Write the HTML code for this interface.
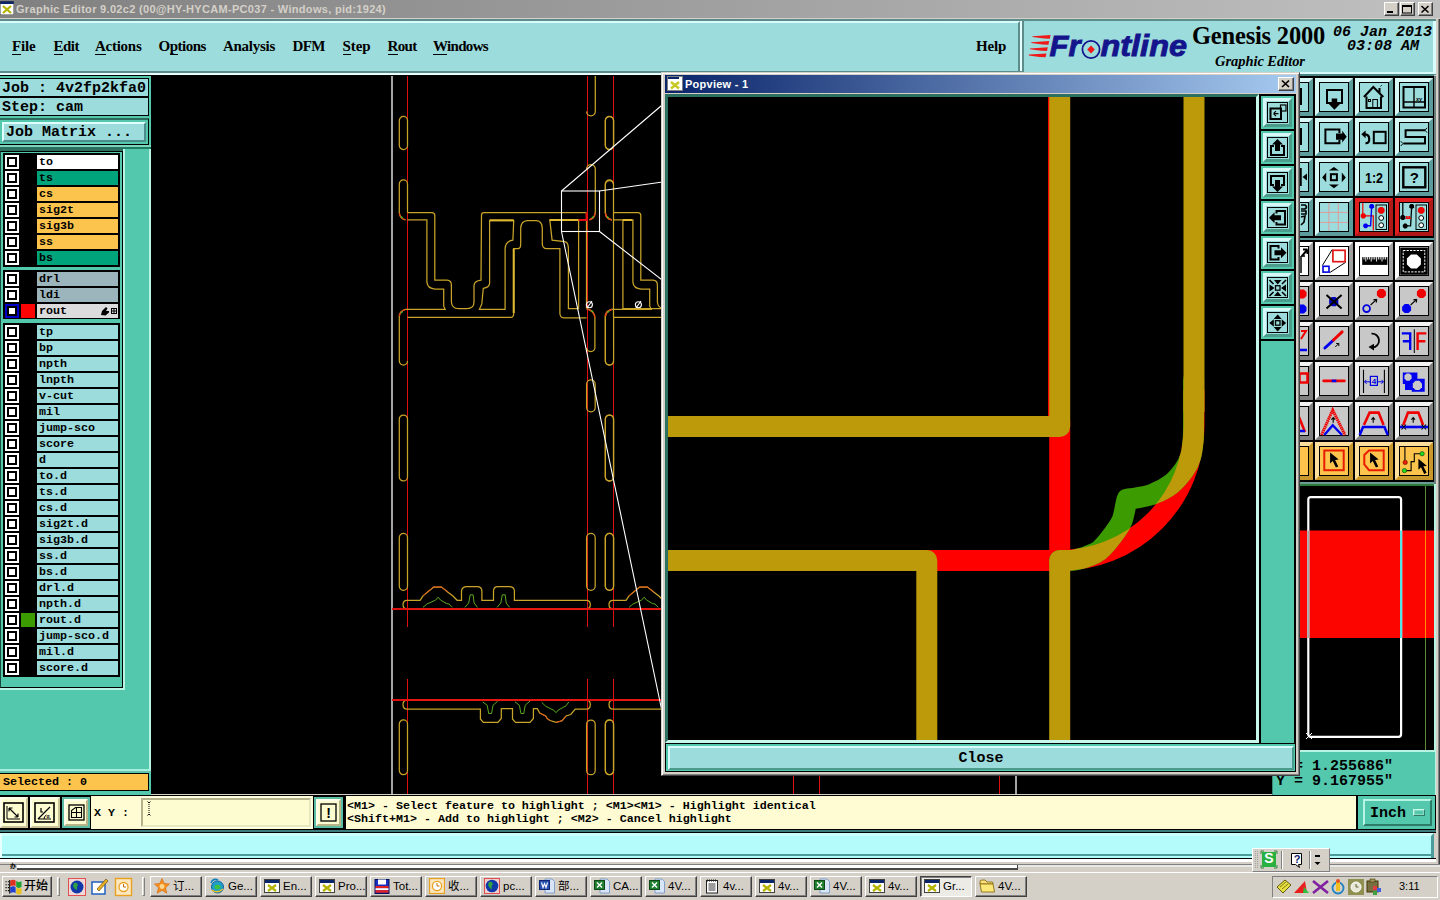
<!DOCTYPE html><html><head><meta charset="utf-8"><title>Graphic Editor</title><style>
*{box-sizing:border-box}
html,body{margin:0;padding:0}
body{width:1440px;height:900px;position:relative;overflow:hidden;background:#d4d0c8;font-family:"Liberation Sans",sans-serif}
.a{position:absolute}
.mono{font-family:"Liberation Mono",monospace;font-weight:bold;color:#000;white-space:pre}
.serif{font-family:"Liberation Serif",serif;font-weight:bold;color:#000;white-space:pre}
.sans{font-family:"Liberation Sans","Noto Sans CJK SC",sans-serif;color:#000;white-space:pre}
.m15{font-size:15px;line-height:15px}
.m12{font-size:11.67px;line-height:15px}
u{text-decoration:none;border-bottom:1px solid #000;padding-bottom:0}
.menu span{position:absolute;top:0;font-size:15px;line-height:18px}
.cb{position:absolute;left:5px;width:14px;height:14px;background:#fff}
.cb i{position:absolute;left:2px;top:2px;width:10px;height:10px;border:2px solid #000;background:#fff}
.lb{position:absolute;left:37px;width:81px;height:14px;padding-left:2px}
.tb{position:absolute;width:38px;height:38px;border-style:solid;border-width:4px;background:#9cdcdc;border-color:#d8f8f8 #5c9c9c #5c9c9c #d8f8f8}
.tb .f{position:absolute;left:0;top:0;width:30px;height:30px;border:1px solid #000}
.tb svg{position:absolute;left:-4px;top:-4px;width:38px;height:38px}
.tb.g{background:#c8c8c8;border-color:#f4f4f4 #808080 #808080 #f4f4f4}
.tb.w{background:#fff;border-color:#fff #a0a0a0 #a0a0a0 #fff}
.tb.y{background:#fcc44c;border-color:#fce09c #c8982c #c8982c #fce09c}
.tb.r{background:#9cdcdc;border-color:#e02020 #b01818 #b01818 #e02020}
.pb{position:absolute;left:1261px;width:33px;height:33px;background:#54c8ac}
.pb b{position:absolute;left:2px;top:2px;width:29px;height:29px;border-style:solid;border-width:3px;border-color:#d8f8f8 #4c9c8c #4c9c8c #d8f8f8;background:#9cdcdc}
.pb b i{position:absolute;left:1px;top:1px;width:21px;height:21px;border:1px solid #000}
.pb svg{position:absolute;left:0;top:0;width:33px;height:34px}
.tk{position:absolute;top:876px;height:21px;width:52px;border:1px solid;border-color:#fff #404040 #404040 #fff;box-shadow:inset -1px -1px 0 #808080;background:#d4d0c8;font-size:11.5px;line-height:19px}
.tk span{position:absolute;left:22px;top:0}
.tk svg{position:absolute;left:3px;top:1px;width:16px;height:16px}
</style></head><body>
<div class="a" style="left:0;top:0;width:1440px;height:18px;background:linear-gradient(90deg,#808080 0%,#c0c0c0 100%)"></div>
<div class="a" style="left:0;top:18px;width:1440px;height:1px;background:#d4d0c8"></div>
<svg class="a" style="left:0;top:1px" width="14" height="14" viewBox="0 0 14 14"><rect width="14" height="14" fill="#fff"/><rect width="14" height="3" fill="#0a246a"/><rect x="0" y="0" width="14" height="14" fill="none" stroke="#404040" stroke-width="1"/><path d="M3 5L11 12M11 5L3 12" stroke="#b4b400" stroke-width="2.2"/></svg>
<div class="a sans" id="t_title" style="left:16px;top:3px;font-size:11px;line-height:13px;font-weight:bold;color:#d4d0c8;letter-spacing:0.31px">Graphic Editor 9.02c2 (00@HY-HYCAM-PC037 - Windows, pid:1924)</div>
<div class="a" style="left:1384px;top:2px;width:15px;height:14px;background:#d4d0c8;border:1px solid;border-color:#fff #404040 #404040 #fff;box-shadow:inset -1px -1px 0 #808080"><svg class="a" style="left:-1px;top:0px" width="15" height="13" viewBox="0 0 15 13"><rect x="3" y="8" width="6" height="2" fill="#000"/></svg></div><div class="a" style="left:1400px;top:2px;width:15px;height:14px;background:#d4d0c8;border:1px solid;border-color:#fff #404040 #404040 #fff;box-shadow:inset -1px -1px 0 #808080"><svg class="a" style="left:-1px;top:0px" width="15" height="13" viewBox="0 0 15 13"><rect x="2.5" y="2.5" width="9" height="7.5" fill="none" stroke="#000"/><rect x="2" y="2" width="10" height="2" fill="#000"/></svg></div><div class="a" style="left:1418px;top:2px;width:15px;height:14px;background:#d4d0c8;border:1px solid;border-color:#fff #404040 #404040 #fff;box-shadow:inset -1px -1px 0 #808080"><svg class="a" style="left:-1px;top:0px" width="15" height="13" viewBox="0 0 15 13"><path d="M3.5 3L10.5 9.5M10.5 3L3.5 9.5" stroke="#000" stroke-width="1.6"/></svg></div>
<div class="a" style="left:0;top:19px;width:1436px;height:56px;background:#5c8c8c"></div>
<div class="a" style="left:0;top:21px;width:1020px;height:50px;background:#9cdcdc;border-top:2px solid #d8fcfc;border-right:2px solid #5c8c8c"></div>
<div class="a" style="left:1020px;top:21px;width:2px;height:50px;background:#e8ffff"></div>
<div class="a" style="left:1024px;top:21px;width:1411px;height:51px;background:#9cdcdc"></div>
<div class="a" style="left:0;top:73px;width:1022px;height:2px;background:#e8ffff"></div>
<div class="a" style="left:1024px;top:72px;width:412px;height:2px;background:#d8fcfc"></div>
<div class="a" style="left:1433px;top:21px;width:3px;height:53px;background:#d8fcfc"></div>
<div class="a serif menu" style="left:0;top:37px;width:1020px;height:20px"><span id="mn0" style="left:12px;letter-spacing:-0.17px"><u>F</u>ile</span><span id="mn1" style="left:53.5px;letter-spacing:-0.50px"><u>E</u>dit</span><span id="mn2" style="left:95px;letter-spacing:-0.26px"><u>A</u>ctions</span><span id="mn3" style="left:158.5px;letter-spacing:-0.49px">O<u>p</u>tions</span><span id="mn4" style="left:223px;letter-spacing:-0.28px">Analysis</span><span id="mn5" style="left:292.5px;letter-spacing:-0.57px">DFM</span><span id="mn6" style="left:342.5px;letter-spacing:-0.08px"><u>S</u>tep</span><span id="mn7" style="left:387.5px;letter-spacing:-0.67px"><u>R</u>out</span><span id="mn8" style="left:433px;letter-spacing:-0.69px"><u>W</u>indows</span><span id="mn9" style="left:976px;letter-spacing:-0.20px">Help</span></div>
<svg class="a" style="left:1028px;top:30px" width="164" height="34" viewBox="1028 30 164 34">
<g fill="#f01818"><path d="M1032.500,36.200L1050.600,35L1049.800,38.800L1044,38.600L1032.500,37Z"/><path d="M1031.300,42.200L1049.200,41L1048.400,44.800L1042.500,44.600L1031.300,43Z"/><path d="M1030,48.400L1047.800,47.200L1047,51L1041,50.800L1030,49.200Z"/><path d="M1028.800,54.600L1046.400,53.400L1045.600,57.200L1039.600,57L1028.800,55.400Z"/></g>
<g font-family="Liberation Sans,sans-serif" font-weight="bold" font-style="italic" font-size="29.8" fill="#14148c" stroke="#14148c" stroke-width="0.9">
<text id="t_fr" x="1049.500" y="56.400" textLength="31" lengthAdjust="spacingAndGlyphs">Fr</text>
<text id="t_nt" x="1100.500" y="56.400" textLength="86.500" lengthAdjust="spacingAndGlyphs">ntline</text></g>
<circle cx="1091" cy="49.500" r="8.600" fill="none" stroke="#14148c" stroke-width="1.700"/>
<path d="M1091,45.500L1094.800,49.500L1091,53.500L1087.200,49.500Z" fill="#f01818"/>
</svg>
<div class="a serif" id="t_gen" style="left:1192px;top:21px;font-size:24.5px;line-height:30px;letter-spacing:-0.2px">Genesis 2000</div>
<div class="a serif" id="t_ge" style="left:1215px;top:53px;font-size:14.5px;line-height:16px;font-style:italic;letter-spacing:-0.05px">Graphic Editor</div>
<div class="a mono" id="t_d1" style="left:1333px;top:25px;font-size:15px;line-height:15px;font-style:italic">06 Jan 2013</div>
<div class="a mono" id="t_d2" style="left:1347px;top:39px;font-size:15px;line-height:15px;font-style:italic">03:08 AM</div>
<div class="a" style="left:0;top:75px;width:151px;height:720px;background:#54c8ac;border-top:1px solid #000"></div>
<div class="a" style="left:149px;top:149px;width:2px;height:623px;background:#b8f4e4"></div>
<div class="a" style="left:0;top:769px;width:151px;height:3px;background:#a4f0dc;border-bottom:1px solid #6cc4b0"></div>
<div class="a mono m15" id="t_job" style="left:-1px;top:78px;width:150px;height:19px;background:#9cdcdc;border:1px solid #000;padding:2px 0 0 2px">Job : 4v2fp2kfa0</div>
<div class="a mono m15" id="t_step" style="left:-1px;top:97px;width:150px;height:19px;background:#9cdcdc;border:1px solid #000;padding:2px 0 0 2px">Step: cam</div>
<div class="a" style="left:-1px;top:118px;width:150px;height:27px;border:1px solid #000;border-top:2px solid #2c6c5c"></div>
<div class="a mono m15" id="t_jm" style="left:2px;top:122px;width:144px;height:20px;background:#9cdcdc;border:2px solid;border-color:#e0ffff #4c8c8c #4c8c8c #e0ffff;padding:1px 0 0 2px">Job Matrix ...</div>
<div class="a" style="left:0;top:145px;width:151px;height:2px;background:#7cd4bc"></div>
<div class="a" style="left:0;top:147px;width:123px;height:4px;background:#2c7060"></div>
<div class="a" style="left:123px;top:147px;width:28px;height:2px;background:#1c7c64"></div>
<div class="a" style="left:0;top:151px;width:123px;height:537px;background:#54c8ac;border:1px solid #000;border-left:1px solid #1c4c40"></div>
<div class="a" style="left:123px;top:149px;width:2px;height:541px;background:#b8f4e4"></div>
<div class="a" style="left:0;top:688px;width:125px;height:2px;background:#b8f4e4"></div>
<div class="a" style="left:3px;top:153px;width:117px;height:114px;background:#000"></div>
<div class="cb" style="top:155px;"><i></i></div><div class="lb mono m12" style="top:155px;background:#fff">to</div>
<div class="cb" style="top:171px;"><i></i></div><div class="lb mono m12" style="top:171px;background:#00a47c">ts</div>
<div class="cb" style="top:187px;"><i></i></div><div class="lb mono m12" style="top:187px;background:#fcc44c">cs</div>
<div class="cb" style="top:203px;"><i></i></div><div class="lb mono m12" style="top:203px;background:#fcc44c">sig2t</div>
<div class="cb" style="top:219px;"><i></i></div><div class="lb mono m12" style="top:219px;background:#fcc44c">sig3b</div>
<div class="cb" style="top:235px;"><i></i></div><div class="lb mono m12" style="top:235px;background:#fcc44c">ss</div>
<div class="cb" style="top:251px;"><i></i></div><div class="lb mono m12" style="top:251px;background:#00a47c">bs</div>
<div class="a" style="left:3px;top:270px;width:117px;height:49px;background:#000"></div>
<div class="cb" style="top:272px;"><i></i></div><div class="lb mono m12" style="top:272px;background:#9cb4bc">drl</div>
<div class="cb" style="top:288px;"><i></i></div><div class="lb mono m12" style="top:288px;background:#9cb4bc">ldi</div>
<div class="cb" style="top:304px;background:#0000c8"><i></i></div><div class="a" style="left:21px;top:304px;width:14px;height:14px;background:#fc0404"></div><div class="lb mono m12" style="top:304px;background:#dcdcdc">rout</div><svg class="a" style="left:100px;top:306px" width="18" height="10" viewBox="0 0 18 10"><path d="M1 9L2 5L6 1L7.5 2.5L6 5L9 5L9 6.5L5.5 9.5Z" fill="#000"/><rect x="11.5" y="2.5" width="5" height="5" fill="none" stroke="#000"/><path d="M14 2.5V7.5M11.5 5H16.5" stroke="#000"/></svg>
<div class="a" style="left:3px;top:323px;width:117px;height:354px;background:#000"></div>
<div class="cb" style="top:325px;"><i></i></div><div class="lb mono m12" style="top:325px;background:#9cdcdc">tp</div>
<div class="cb" style="top:341px;"><i></i></div><div class="lb mono m12" style="top:341px;background:#9cdcdc">bp</div>
<div class="cb" style="top:357px;"><i></i></div><div class="lb mono m12" style="top:357px;background:#9cdcdc">npth</div>
<div class="cb" style="top:373px;"><i></i></div><div class="lb mono m12" style="top:373px;background:#9cdcdc">lnpth</div>
<div class="cb" style="top:389px;"><i></i></div><div class="lb mono m12" style="top:389px;background:#9cdcdc">v-cut</div>
<div class="cb" style="top:405px;"><i></i></div><div class="lb mono m12" style="top:405px;background:#9cdcdc">mil</div>
<div class="cb" style="top:421px;"><i></i></div><div class="lb mono m12" style="top:421px;background:#9cdcdc">jump-sco</div>
<div class="cb" style="top:437px;"><i></i></div><div class="lb mono m12" style="top:437px;background:#9cdcdc">score</div>
<div class="cb" style="top:453px;"><i></i></div><div class="lb mono m12" style="top:453px;background:#9cdcdc">d</div>
<div class="cb" style="top:469px;"><i></i></div><div class="lb mono m12" style="top:469px;background:#9cdcdc">to.d</div>
<div class="cb" style="top:485px;"><i></i></div><div class="lb mono m12" style="top:485px;background:#9cdcdc">ts.d</div>
<div class="cb" style="top:501px;"><i></i></div><div class="lb mono m12" style="top:501px;background:#9cdcdc">cs.d</div>
<div class="cb" style="top:517px;"><i></i></div><div class="lb mono m12" style="top:517px;background:#9cdcdc">sig2t.d</div>
<div class="cb" style="top:533px;"><i></i></div><div class="lb mono m12" style="top:533px;background:#9cdcdc">sig3b.d</div>
<div class="cb" style="top:549px;"><i></i></div><div class="lb mono m12" style="top:549px;background:#9cdcdc">ss.d</div>
<div class="cb" style="top:565px;"><i></i></div><div class="lb mono m12" style="top:565px;background:#9cdcdc">bs.d</div>
<div class="cb" style="top:581px;"><i></i></div><div class="lb mono m12" style="top:581px;background:#9cdcdc">drl.d</div>
<div class="cb" style="top:597px;"><i></i></div><div class="lb mono m12" style="top:597px;background:#9cdcdc">npth.d</div>
<div class="cb" style="top:613px;"><i></i></div><div class="a" style="left:21px;top:613px;width:14px;height:14px;background:#3c9b00"></div><div class="lb mono m12" style="top:613px;background:#9cdcdc">rout.d</div>
<div class="cb" style="top:629px;"><i></i></div><div class="lb mono m12" style="top:629px;background:#9cdcdc">jump-sco.d</div>
<div class="cb" style="top:645px;"><i></i></div><div class="lb mono m12" style="top:645px;background:#9cdcdc">mil.d</div>
<div class="cb" style="top:661px;"><i></i></div><div class="lb mono m12" style="top:661px;background:#9cdcdc">score.d</div>
<div class="a mono m12" id="t_sel" style="left:-1px;top:773px;width:150px;height:18px;background:#fcc44c;border:1px solid #000;padding:1px 0 0 3px">Selected : 0</div><svg class="a" style="left:151px;top:75px" width="1121" height="719" viewBox="151 75 1121 719">
<rect x="151" y="75" width="1121" height="719" fill="#000"/>
<g shape-rendering="crispEdges" stroke-width="1" fill="none">
<path d="M391.5,76V794M1015.5,76V794" stroke="#a4a4a4" stroke-width="2"/>
<path d="M407.5,76V627M407.5,679V794" stroke="#e01010"/>
<path d="M587.5,76V627M587.5,679V794" stroke="#e01010"/>
<path d="M613.5,76V627M613.5,679V794" stroke="#e01010"/>
<path d="M793.5,76V627M793.5,679V794" stroke="#e01010"/>
<path d="M819.5,76V627M819.5,679V794" stroke="#e01010"/>
<path d="M999.5,76V627M999.5,679V794" stroke="#e01010"/>
</g>
<g fill="none" stroke="#c8a428" stroke-width="1.25">
<path id="tile" d="M407.5,212.5 H431.8 Q434.8,212.5 434.8,215.5 V280.2 H447 Q451.4,280.5 451.4,285 V302.3 Q452,308.6 458.4,308.6 H467 Q474,308.6 474,302 V285.2 Q474.5,281 481,280.2 L481.5,215.2 Q481.5,212.5 484,212.5 H586.5 M407.5,219.9 H426.9 V282.1 Q427.5,288.5 435.1,289.1 H443.7 V306.2 L445.2,309.3 H405.5 M479.4,309.3 H505.1 V248.7 Q505.5,241 512.9,240.1 L513.7,220.7 H489.6 V283.7 Q489,287.5 483.3,288.3 L481.8,303.9 Z M407.5,317.4 H511.3 Q513.7,317 513.7,313.2 V248.7 H518 Q520.5,248.5 520.7,244.5 V228.4 Q521,221 527.2,220.7 H536.6 Q542,221 542.3,228.4 V244 Q542.5,248.5 546.7,248.7 H559.9 V313.2 Q560,317.5 563.8,317.9 H586.5 M549.8,219.9 H578.6 V308.6 H568.4 V247.9 Q568,242 564.6,241.7 L552.1,240.1 Z M399.3,120.6 A4.099999999999994,4.099999999999994 0 0 1 407.5,120.6 V145.4 A4.099999999999994,4.099999999999994 0 0 1 399.3,145.4 Z M407.5,212.5 V184 A4.1,4.1 0 0 0 399.3,184 V213 Q400,218.5 405.5,219.9 M405.5,309.3 Q399.6,311 399.3,316.3 V361 A4.1,4.1 0 0 0 407.5,361 M399.3,419.1 A4.099999999999994,4.099999999999994 0 0 1 407.5,419.1 V476.9 A4.099999999999994,4.099999999999994 0 0 1 399.3,476.9 Z M399.3,537.5 A4.099999999999994,4.099999999999994 0 0 1 407.5,537.5 V586.1999999999999 A4.099999999999994,4.099999999999994 0 0 1 399.3,586.1999999999999 Z M399.3,724.1 A4.099999999999994,4.099999999999994 0 0 1 407.5,724.1 V770.6 A4.099999999999994,4.099999999999994 0 0 1 399.3,770.6 Z M595.3,76 V111.6 A4.3,4.3 0 0 1 586.6,111.6 M586.6,169 A4.3,4.3 0 0 1 595.3,169 V212.4 Q595,218 589.4,219.9 M586.6,308.6 Q594.6,311 594.9,317.9 V348 A4.2,4.2 0 0 1 586.6,348 M586.6,384.3 A4.300000000000011,4.300000000000011 0 0 1 595.2,384.3 V407.59999999999997 A4.300000000000011,4.300000000000011 0 0 1 586.6,407.59999999999997 Z M586.6,537.7 A4.300000000000011,4.300000000000011 0 0 1 595.2,537.7 V586.0 A4.300000000000011,4.300000000000011 0 0 1 586.6,586.0 Z M586.6,724.3 A4.300000000000011,4.300000000000011 0 0 1 595.2,724.3 V770.4000000000001 A4.300000000000011,4.300000000000011 0 0 1 586.6,770.4000000000001 Z M605.4,120.60000000000002 A4.100000000000023,4.100000000000023 0 0 1 613.6,120.60000000000002 V145.39999999999998 A4.100000000000023,4.100000000000023 0 0 1 605.4,145.39999999999998 Z M613.5,184 A4.1,4.1 0 0 0 605.4,184 V213 Q606,218.5 612,219.9 M612,309.3 Q606,311 605.4,316.3 V361 A4.1,4.1 0 0 0 613.6,361 V317 M605.4,419.1 A4.100000000000023,4.100000000000023 0 0 1 613.6,419.1 V476.9 A4.100000000000023,4.100000000000023 0 0 1 605.4,476.9 Z M605.4,537.5 A4.100000000000023,4.100000000000023 0 0 1 613.6,537.5 V586.1999999999999 A4.100000000000023,4.100000000000023 0 0 1 605.4,586.1999999999999 Z M605.4,724.1 A4.100000000000023,4.100000000000023 0 0 1 613.6,724.1 V770.6 A4.100000000000023,4.100000000000023 0 0 1 605.4,770.6 Z M407,600.3 H420.1 L423,595.8 L428.9,590.9 L433.7,587 H441.5 L448.3,592.4 L453.2,596.2 L457.1,600.3 H461.5 V591 Q462,586.5 466.8,586.5 H477 Q481.9,586.5 481.9,591 V600.3 H493.5 V591 Q493.5,586.5 497.9,586.5 H509.1 Q514.4,586.5 514.4,591 V600.3 H586.5 Q590.3,600.3 590.3,604.6 Q590.3,609 586.5,609 H407 Q403,609 403,604.6 Q403,600.3 407,600.3 M407,700 H586.5 Q590.3,700 590.3,704.5 Q590.3,709.2 586.4,709.2 H575.2 L570.8,714.5 L566,716 L562.1,720.8 L556.2,722.3 L550,720.5 L547.5,718.9 L545.6,716 L539.7,713 L537.3,708.7 H533.4 V718.4 L530,722.3 H515.4 L512.5,718.9 V708.7 H501.3 V718.4 L497.9,722.3 H483.3 L480.4,718.9 V709.2 H407 Q403,709.2 403,704.5 Q403,700 407,700"/>
<use href="#tile" x="206" y="0"/>
<path d="M622.9,219.9 V308.6 H661 M622.9,219.9 H632 M586.5,220V308.600 M613.500,212.500V317.400"/>
<path d="M513.7,248.7V313 M489.6,220.3H513.7 M549.8,220H578.6 M622.9,220H632" stroke="#e0b830" stroke-width="2"/>
</g>
<g fill="none" stroke="#58a820" stroke-width="1"><path id="grn" d="M423,607.4 L426.9,604 L435.7,600.1 L438.1,597.2 L440.6,600.1 L446.4,603.5 L449,604 L452.2,607.4 M464.9,607.4 L468.7,603 L470.2,594.8 H473.1 L474.1,603 L477.5,607.4 M497,607.4 L500.8,603 L502.3,594.8 H505.2 L506.2,603 L509.6,607.4 M482.8,701.9 L487.2,705.3 L488.7,713.5 H491.6 L493,705.3 L497.9,700.9 M515,701.9 L519.4,705.3 L520.9,713.5 H523.8 L525.2,705.3 L530.1,700.9 M541.7,702.4 L545.6,706.2 L553.3,710.1 L556.2,712.6 L558.2,710.1 L566,705.8 L568.9,701.9"/><use href="#grn" x="206"/></g>
<g fill="none" stroke="#e85818" stroke-width="1"><path id="rd" d="M423,595.8 L428.9,590.9 L433.7,587 H441.5 L448.3,592.4 M539.7,713 L545.6,716 L547.5,718.9 L550,720.5 M556.2,722.3 L562.1,720.8 L566,716"/><use href="#rd" x="206"/></g>
<path d="M578.6,220H586.5V212.5" fill="none" stroke="#e01010" stroke-width="2"/>
<path id="tk" d="M399.3,213 Q400,218.5 405.5,219.9 M405.5,309.3 Q399.6,311 399.3,316.3 M595.3,212.4 Q595,218 589.4,219.9 M586.6,308.6 Q594.6,311 594.9,317.9 M605.4,213 Q606,218.5 612,219.9 M612,309.3 Q606,311 605.4,316.3" fill="none" stroke="#e04818" stroke-width="1.3"/><use href="#tk" x="206"/>
<path d="M401,216.500l1.500,1.500M401,313l1.500,-1.500M593.500,216.500l-1.500,1.500M593,312l-1.500,-1.500M607,216.500l1.500,1.500M607.500,312.500l1.500,-1.500" fill="none" stroke="#40c020" stroke-width="1.4"/>
<path d="M392,609H1015M392,700H1015" stroke="#f01010" stroke-width="2.4" shape-rendering="crispEdges" opacity="0.92"/>
<g fill="none" stroke="#fff" stroke-width="1.1"><rect x="561.5" y="191" width="38" height="40.5"/><path d="M561.5,191L668,100M599.5,191L1256,97M599.5,231.5L1256,740M561.5,231.5L668,740"/><circle cx="589.4" cy="304.7" r="3"/><path d="M587,308L592,301"/><circle cx="638.4" cy="304.7" r="3"/><path d="M636,308L641,301"/></g>
</svg><div class="a" style="left:1272px;top:74px;width:162px;height:676px;background:#000;border-top:2px solid #4c8484"></div>
<div class="a" style="left:1434px;top:76px;width:2px;height:408px;background:#6c7c7c"></div>
<div class="a" style="left:1434px;top:484px;width:2px;height:311px;background:#b8f4e4"></div>
<div class="a" style="left:1272px;top:238px;width:162px;height:2px;background:#5c9c9c"></div>
<div class="a" style="left:1272px;top:482px;width:162px;height:2px;background:#6c9c94"></div>
<div class="a" style="left:1272px;top:484px;width:162px;height:2px;background:#2c7c3c"></div>
<div class="tb " style="left:1275px;top:78px"><div class="f"></div><svg viewBox="0 0 38 38"><rect x="12" y="11" width="14" height="15" stroke="#000" fill="none" stroke-width="2"/></svg></div>
<div class="tb " style="left:1315px;top:78px"><div class="f"></div><svg viewBox="0 0 38 38"><path d="M16,12H12V25H17M22,25H27V12H16" stroke="#000" fill="none" stroke-width="2"/><path d="M16.7,20.5H22.2V26H25L19.4,31.8L13.9,26H16.7Z" fill="#000"/></svg></div>
<div class="tb " style="left:1355px;top:78px"><div class="f"></div><svg viewBox="0 0 38 38"><path d="M8.9,19L18.3,9L28.3,19M11.5,18.5V30H26V18.5M24.500,15V10" stroke="#000" fill="none" stroke-width="2"/><rect x="17.8" y="21.5" width="4.6" height="8.5" stroke="#000" fill="none"/><rect x="13.5" y="21.5" width="2" height="2" stroke="#000" fill="none"/><path d="M25.5,8.5l1.2,-1.2" stroke="#000" fill="none"/></svg></div>
<div class="tb " style="left:1395px;top:78px"><div class="f"></div><svg viewBox="0 0 38 38"><rect x="8.5" y="9" width="21.5" height="20.5" stroke="#000" fill="none" stroke-width="2"/><path d="M19,9V29.5M8.5,24H30" stroke="#000" fill="none" stroke-width="1.4"/><text x="21" y="22.5" font-family="Liberation Sans,sans-serif" font-size="5.5" font-weight="bold" fill="#000">xy</text></svg></div>
<div class="tb " style="left:1275px;top:118px"><div class="f"></div><svg viewBox="0 0 38 38"><rect x="12" y="11" width="14" height="15" stroke="#000" fill="none" stroke-width="2"/></svg></div>
<div class="tb " style="left:1315px;top:118px"><div class="f"></div><svg viewBox="0 0 38 38"><path d="M24.4,15V11.5H10.4V25.2H24.4V22" stroke="#000" fill="none" stroke-width="2"/><path d="M21,15.6H27.2V12.8L31.7,18.7L27.2,24.4V21.7H21Z" fill="#000"/></svg></div>
<div class="tb " style="left:1355px;top:118px"><div class="f"></div><svg viewBox="0 0 38 38"><rect x="18.8" y="13.8" width="11.8" height="11.4" stroke="#000" fill="none" stroke-width="2"/><path d="M10.5,25.2Q14.5,25.5 14.2,21Q14.2,16.5 10,16.3" stroke="#000" fill="none" stroke-width="2.2"/><path d="M6.3,16.3L10.6,12.4V20.2Z" fill="#000"/></svg></div>
<div class="tb " style="left:1395px;top:118px"><div class="f"></div><svg viewBox="0 0 38 38"><path d="M30,12.2H10.6V18.9H30V25.6H8.3" stroke="#000" fill="none" stroke-width="2"/><path d="M32,9.8L30,12.2L32,14.6M5.7,23.2L8,25.6L5.7,28" stroke="#000" fill="none"/></svg></div>
<div class="tb " style="left:1275px;top:158px"><div class="f"></div><svg viewBox="0 0 38 38"><path d="M25.500,10V28" stroke="#000" fill="none" stroke-width="2.500"/><path d="M27.500,19L32,15.500V22.500Z" fill="#000"/></svg></div>
<div class="tb " style="left:1315px;top:158px"><div class="f"></div><svg viewBox="0 0 38 38"><rect x="15.9" y="16.2" width="6" height="6" stroke="#000" fill="none" stroke-width="2"/><path d="M18.9,8.9L23.9,12.6H13.9ZM18.9,30.3L23.9,26.6H13.9ZM7.2,19.4L11.2,14.6V24.2ZM30.8,19.4L26.8,14.6V24.2Z" fill="#000"/></svg></div>
<div class="tb " style="left:1355px;top:158px"><div class="f"></div><svg viewBox="0 0 38 38"><text x="19" y="25" text-anchor="middle" font-family="Liberation Sans,sans-serif" font-size="15.5" font-weight="bold" fill="#000" textLength="18" lengthAdjust="spacingAndGlyphs">1:2</text></svg></div>
<div class="tb " style="left:1395px;top:158px"><div class="f"></div><svg viewBox="0 0 38 38"><rect x="8.3" y="9.3" width="22" height="20" stroke="#000" fill="none" stroke-width="2.4"/><text x="19.4" y="25" text-anchor="middle" font-family="Liberation Sans,sans-serif" font-size="15" font-weight="bold" fill="#000">?</text></svg></div>
<div class="tb " style="left:1275px;top:198px"><div class="f"></div><svg viewBox="0 0 38 38"><path d="M26,7H30Q33,9 30,11H26M26,13H31V16H26M26,19L30,18L29,24L26,27" stroke="#000" fill="none" stroke-width="1.6"/></svg></div>
<div class="tb " style="left:1315px;top:198px"><div class="f"></div><svg viewBox="0 0 38 38"><path d="M13.9,5V33M23.3,5V33M5,14.4H33M5,24.4H33" stroke="#dc9c9c" fill="none" stroke-width="1"/></svg></div>
<div class="tb r" style="left:1355px;top:198px"><div class="f"></div><svg viewBox="0 0 38 38"><path d="M7.8,5V17.5M8.3,17.8H18.3V32.5" stroke="#f00000" fill="none" stroke-width="1.2"/><path d="M16.7,8.3L15.6,27.8H10.6" stroke="#0000f0" fill="none" stroke-width="1.4"/><polygon points="10.9,18.9 9.4,20.4 7.2,20.4 5.7,18.9 5.7,16.7 7.2,15.2 9.4,15.2 10.9,16.7" fill="#f00000" /><polygon points="19.1,9.3 17.7,10.7 15.7,10.7 14.3,9.3 14.3,7.3 15.7,5.9 17.7,5.9 19.1,7.3" fill="#0000f0" /><polygon points="13.0,28.8 11.6,30.2 9.6,30.2 8.2,28.8 8.2,26.8 9.6,25.4 11.6,25.4 13.0,26.8" fill="#0000f0" /><rect x="21" y="7" width="10.5" height="24.5" stroke="#000" fill="none"/><polygon points="29.6,13.8 27.6,15.8 24.8,15.8 22.8,13.8 22.8,11.0 24.8,9.0 27.6,9.0 29.6,11.0" fill="#f00000" /><circle cx="26.2" cy="20" r="2.4" fill="#fff" stroke="#000"/><circle cx="26.2" cy="27.2" r="2.4" fill="#fff" stroke="#000"/></svg></div>
<div class="tb r" style="left:1395px;top:198px"><div class="f"></div><svg viewBox="0 0 38 38"><path d="M7.8,5V17.5M16.7,8.3L15.6,27.8H10.6" stroke="#000" fill="none" stroke-width="1.3"/><path d="M10.5,20.5H16M11.5,20.5V18M13,20.5V18M14.5,20.5V18" stroke="#f00000" fill="none" stroke-width="1.2"/><polygon points="10.3,20.5 8.8,22.0 6.8,22.0 5.3,20.5 5.3,18.5 6.8,17.0 8.8,17.0 10.3,18.5" fill="#000" /><polygon points="19.1,9.3 17.7,10.7 15.7,10.7 14.3,9.3 14.3,7.3 15.7,5.9 17.7,5.9 19.1,7.3" fill="#000" /><polygon points="12.6,29.0 11.2,30.4 9.2,30.4 7.8,29.0 7.8,27.0 9.2,25.6 11.2,25.6 12.6,27.0" fill="#000" /><rect x="21" y="7" width="10.5" height="24.5" stroke="#000" fill="none"/><polygon points="29.6,13.8 27.6,15.8 24.8,15.8 22.8,13.8 22.8,11.0 24.8,9.0 27.6,9.0 29.6,11.0" fill="#f00000" /><circle cx="26.2" cy="20" r="2.4" fill="#fff" stroke="#000"/><circle cx="26.2" cy="27.2" r="2.4" fill="#fff" stroke="#000"/></svg></div>
<div class="tb w" style="left:1275px;top:242px"><div class="f"></div><svg viewBox="0 0 38 38"><path d="M26,14V31M26,14H30" stroke="#000" fill="none" stroke-width="1.5"/><path d="M27,14L32.5,7.5M32.5,7.5H28M32.5,7.5V12" stroke="#000" fill="none" stroke-width="2"/></svg></div>
<div class="tb w" style="left:1315px;top:242px"><div class="f"></div><svg viewBox="0 0 38 38"><path d="M7.3,23.6L17.2,7.6M14.6,30.7L30.7,20.3" stroke="#000" fill="none"/><rect x="17.9" y="8.3" width="12.2" height="11.4" stroke="#e01818" fill="none" stroke-width="1.7"/><rect x="8" y="24.3" width="6" height="5.8" stroke="#0000e0" fill="none" stroke-width="1.6"/></svg></div>
<div class="tb w" style="left:1355px;top:242px"><div class="f"></div><svg viewBox="0 0 38 38"><path d="M7.2,15.1H32.4V22.9H7.2Z" fill="#000"/><path d="M9,15V17.5M10.8,15V19.5M12.6,15V17.5M14.4,15V17.5M16.2,15V19.5M18,15V17.5M19.8,15V17.5M21.6,15V19.5M23.4,15V17.5M25.2,15V17.5M27,15V19.5M28.8,15V17.5M30.6,15V17.5" stroke="#fff" stroke-width="0.9"/></svg></div>
<div class="tb w" style="left:1395px;top:242px"><div class="f"></div><svg viewBox="0 0 38 38"><rect x="5.2" y="5.5" width="27.6" height="27.3" fill="#000"/><rect x="8.2" y="8.5" width="21.6" height="21.4" fill="none" stroke="#fff" stroke-width="1" stroke-dasharray="2.2 1.2"/><polygon points="25.9,22.4 21.8,26.5 16.0,26.5 11.9,22.4 11.9,16.6 16.0,12.5 21.8,12.5 25.9,16.6" fill="#fff" /></svg></div>
<div class="tb g" style="left:1275px;top:282px"><div class="f"></div><svg viewBox="0 0 38 38"><polygon points="31.5,13.9 28.9,16.5 25.1,16.5 22.5,13.9 22.5,10.1 25.1,7.5 28.9,7.5 31.5,10.1" fill="#f00000" /><polygon points="31.5,28.9 28.9,31.5 25.1,31.5 22.5,28.9 22.5,25.1 25.1,22.5 28.9,22.5 31.5,25.1" fill="#0000f0" /></svg></div>
<div class="tb g" style="left:1315px;top:282px"><div class="f"></div><svg viewBox="0 0 38 38"><polygon points="23.3,21.5 20.7,24.2 16.8,24.2 14.2,21.5 14.1,17.7 16.8,15.0 20.7,15.0 23.3,17.7" fill="#0000c0" /><path d="M11.5,13L26.6,26.6M26.6,13L11.5,26.6" stroke="#000" fill="none" stroke-width="2"/></svg></div>
<div class="tb g" style="left:1355px;top:282px"><div class="f"></div><svg viewBox="0 0 38 38"><polygon points="30.9,13.4 28.3,16.0 24.5,16.0 21.9,13.4 21.9,9.6 24.5,7.0 28.3,7.0 30.9,9.6" fill="#f00000" /><circle cx="11.6" cy="26.6" r="3.4" fill="none" stroke="#0000e0" stroke-width="1.8"/><path d="M15.6,23L21.4,17.7M21.8,17.3l-3.4,0.6M21.8,17.3l-0.6,3.4" stroke="#000" fill="none" stroke-width="1.1"/></svg></div>
<div class="tb g" style="left:1395px;top:282px"><div class="f"></div><svg viewBox="0 0 38 38"><polygon points="30.9,13.4 28.3,16.0 24.5,16.0 21.9,13.4 21.9,9.6 24.5,7.0 28.3,7.0 30.9,9.6" fill="#f00000" /><polygon points="16.1,28.5 13.5,31.1 9.7,31.1 7.1,28.5 7.1,24.7 9.7,22.1 13.5,22.1 16.1,24.7" fill="#0000f0" /><path d="M15.6,23L21.4,17.7M21.8,17.3l-3.4,0.6M21.8,17.3l-0.6,3.4" stroke="#000" fill="none" stroke-width="1.1"/></svg></div>
<div class="tb g" style="left:1275px;top:322px"><div class="f"></div><svg viewBox="0 0 38 38"><path d="M26,9H31L26,17" stroke="#f00000" fill="none" stroke-width="2"/><path d="M25,28H32" stroke="#0000f0" stroke-width="2.5"/></svg></div>
<div class="tb g" style="left:1315px;top:322px"><div class="f"></div><svg viewBox="0 0 38 38"><path d="M9.9,26L18.5,18" stroke="#0000f0" stroke-width="3" stroke-linecap="round"/><path d="M18.5,18L27.1,9.9" stroke="#f00000" stroke-width="3" stroke-linecap="round"/><path d="M20.3,25L23.6,21.7M23.8,21.5h-2.6M23.8,21.5v2.6" stroke="#000" fill="none" stroke-width="1"/></svg></div>
<div class="tb g" style="left:1355px;top:322px"><div class="f"></div><svg viewBox="0 0 38 38"><path d="M16.5,11.6A6.8,6.8 0 1 1 17.5,25.6" stroke="#000" fill="none" stroke-width="1.8"/><path d="M13.5,25L19,21.8V28.6Z" fill="#000"/></svg></div>
<div class="tb g" style="left:1395px;top:322px"><div class="f"></div><svg viewBox="0 0 38 38"><path d="M6.8,11.4H15.2V28M7.8,19.2H15.2" stroke="#0000f0" fill="none" stroke-width="2.4"/><path d="M31.3,11.4H22.6V28M22.6,19.2H30.3" stroke="#f00000" fill="none" stroke-width="2.4"/><path d="M19.3,7.3V31" stroke="#000" fill="none" stroke-width="1"/></svg></div>
<div class="tb g" style="left:1275px;top:362px"><div class="f"></div><svg viewBox="0 0 38 38"><rect x="24.5" y="11.5" width="8" height="9" fill="none" stroke="#f00000" stroke-width="2.5"/></svg></div>
<div class="tb g" style="left:1315px;top:362px"><div class="f"></div><svg viewBox="0 0 38 38"><path d="M8.6,18.9H29.4" stroke="#f00000" stroke-width="2.6" stroke-linecap="round"/><path d="M16.7,18.9H21.4" stroke="#0000f0" stroke-width="2.6"/></svg></div>
<div class="tb g" style="left:1355px;top:362px"><div class="f"></div><svg viewBox="0 0 38 38"><path d="M8.5,7.8V31M29.4,7.8V31" stroke="#000" fill="none" stroke-width="1.1"/><rect x="15.4" y="14.4" width="7" height="9" fill="none" stroke="#0000e0" stroke-width="1.2"/><path d="M9.5,19.8H15M23,19.8H28.4M11.5,17.8L9.5,19.8L11.5,21.8M26.4,17.8L28.4,19.8L26.4,21.8" stroke="#0000e0" fill="none" stroke-width="1"/><text x="18.9" y="22.3" text-anchor="middle" font-family="Liberation Sans,sans-serif" font-size="8" font-weight="bold" fill="#0000e0">4</text></svg></div>
<div class="tb g" style="left:1395px;top:362px"><div class="f"></div><svg viewBox="0 0 38 38"><path d="M7.8,10.4H22.4V16.7H29.7V29.7H16.7V28H10V22H7.8Z" fill="#0000f0"/><polygon points="16.6,16.6 14.5,18.7 11.5,18.7 9.4,16.6 9.4,13.6 11.5,11.5 14.5,11.5 16.6,13.6" fill="#c8c8c8" /><polygon points="27.0,25.3 24.3,28.0 20.5,28.0 17.8,25.3 17.8,21.5 20.5,18.8 24.3,18.8 27.0,21.5" fill="#c8c8c8" /></svg></div>
<div class="tb g" style="left:1275px;top:402px"><div class="f"></div><svg viewBox="0 0 38 38"><path d="M24,15L30,30" stroke="#f00000" fill="none" stroke-width="2.5"/><path d="M24,29H30" stroke="#0000f0" stroke-width="2.5"/></svg></div>
<div class="tb g" style="left:1315px;top:402px"><div class="f"></div><svg viewBox="0 0 38 38"><path d="M6.5,33L17.7,8L30,33" stroke="#f00000" fill="none" stroke-width="3" stroke-dasharray="1.6 0.5"/><path d="M9.4,33L17.7,23.2L27,33" stroke="#0000f0" fill="none" stroke-width="2.4"/><path d="M18.2,20.8V15.8M16.4,17.6L18.2,15.6L20,17.6" stroke="#000" fill="none" stroke-width="1.1"/></svg></div>
<div class="tb g" style="left:1355px;top:402px"><div class="f"></div><svg viewBox="0 0 38 38"><path d="M8.9,23L14.6,10.6H23.6L28.6,23" stroke="#f00000" fill="none" stroke-width="2.6"/><path d="M4.7,33L8,25H29.5L32.8,33" stroke="#0000f0" fill="none" stroke-width="2.6"/><path d="M18.2,20.8V15.8M16.4,17.6L18.2,15.6L20,17.6" stroke="#000" fill="none" stroke-width="1.1"/></svg></div>
<div class="tb g" style="left:1395px;top:402px"><div class="f"></div><svg viewBox="0 0 38 38"><path d="M8.3,23L13,10.6H23.4L28.1,23" stroke="#f00000" fill="none" stroke-width="2.6"/><path d="M5,25H33" stroke="#0000f0" fill="none" stroke-width="2.6"/><path d="M18.2,20.8V15.8M16.4,17.6L18.2,15.6L20,17.6M6.5,22.5L11,27.5M11,22.5L6.5,27.5M26.5,22.5L31,27.5M31,22.5L26.5,27.5" stroke="#000" fill="none" stroke-width="1.1"/></svg></div>
<div class="tb y" style="left:1275px;top:442px"><div class="f"></div><svg viewBox="0 0 38 38"></svg></div>
<div class="tb y" style="left:1315px;top:442px"><div class="f"></div><svg viewBox="0 0 38 38"><rect x="9.3" y="8.5" width="19.4" height="19.7" fill="none" stroke="#e81c00" stroke-width="2"/><path d="M15.1,10.4 l0,11 l2.6,-2.4 l3.2,6.6 l2.4,-1.2 l-3.2,-6.4 l3.6,-0.4 Z" fill="#000"/></svg></div>
<div class="tb y" style="left:1355px;top:442px"><div class="f"></div><svg viewBox="0 0 38 38"><path d="M14,8.5H28.7V28.2H14L9.3,22.5V13Z" fill="none" stroke="#e81c00" stroke-width="2"/><path d="M15.1,10.4 l0,11 l2.6,-2.4 l3.2,6.6 l2.4,-1.2 l-3.2,-6.4 l3.6,-0.4 Z" fill="#000"/></svg></div>
<div class="tb y" style="left:1395px;top:442px"><div class="f"></div><svg viewBox="0 0 38 38"><path d="M9.9,5V18.5M9.4,28.6H16.1V19.6H19.3V11.7H27" stroke="#000" fill="none" stroke-width="1.1"/><circle cx="10.2" cy="20.4" r="2.2" fill="#e81c00" stroke="#601000" stroke-width="0.6"/><circle cx="27.1" cy="11.7" r="2.2" fill="#20d820" stroke="#084008" stroke-width="0.6"/><circle cx="9.4" cy="28.6" r="2.2" fill="#20d820" stroke="#084008" stroke-width="0.6"/><path d="M23.4,16.7 l0,11 l2.6,-2.4 l3.2,6.6 l2.4,-1.2 l-3.2,-6.4 l3.6,-0.4 Z" fill="#000"/></svg></div>
<svg class="a" style="left:1272px;top:486px" width="163" height="264" viewBox="1272 486 163 264">
<rect x="1272" y="486" width="163" height="264" fill="#000"/>
<rect x="1272" y="530.5" width="162" height="107.5" fill="#fc0400"/>
<rect x="1308.3" y="497.2" width="92.8" height="239.6" rx="2.5" fill="none" stroke="#fff" stroke-width="2.2"/>
<path d="M1308.3,530.5V638" stroke="#a8a8a8" stroke-width="2.2"/><path d="M1401.1,530.5V638" stroke="#58e4e4" stroke-width="2.2"/>
<path d="M1425.5,486V750" stroke="#5c8c34" stroke-width="1"/><path d="M1425.5,530.5V638" stroke="#fc8c04" stroke-width="1"/>
<path d="M1306,733L1312,739M1312,733L1306,739" stroke="#fff" stroke-width="1"/>
<rect x="1434" y="486" width="1" height="264" fill="#b8f4e4"/>
</svg>
<div class="a" style="left:1272px;top:750px;width:163px;height:45px;background:#54c8ac;border-top:2px solid #b8f4e4;border-left:1px solid #3c8c78"></div>
<div class="a mono m15" id="t_x" style="left:1276px;top:759px">X = 1.255686"</div>
<div class="a mono m15" id="t_y" style="left:1276px;top:774px">Y = 9.167955"</div><div class="a" style="left:0;top:795px;width:1436px;height:37px;background:#000"></div>
<div class="a" style="left:0;top:829px;width:1436px;height:3px;background:#3c7c7c;border-top:1px solid #000"></div>
<div class="a" style="left:0px;top:797px;width:28px;height:31px;background:#fcfcd0;border:2px solid;border-color:#ffffec #c8c498 #c8c498 #ffffec"><svg class="a" style="left:-2px;top:-2px" width="28" height="31" viewBox="0 0 28 31"><rect x="4" y="6" width="19" height="19" stroke="#000" fill="none" stroke-width="1.6"/><path d="M7,9V22H20" stroke="#000" fill="none" stroke-width="1"/><path d="M9,11L18,20M9,11h3.5M9,11v3.5M18,20h-3.5M18,20v-3.5" stroke="#000" fill="none" stroke-width="1.1"/></svg></div><div class="a" style="left:30px;top:797px;width:30px;height:31px;background:#fcfcd0;border:2px solid;border-color:#ffffec #c8c498 #c8c498 #ffffec"><svg class="a" style="left:-2px;top:-2px" width="30" height="31" viewBox="0 0 30 31"><rect x="5" y="6" width="19" height="19" stroke="#000" fill="none" stroke-width="1.6"/><path d="M8,22L20,10M8,22H21M11,11V15H13" stroke="#000" fill="none" stroke-width="1.2"/><path d="M14,22Q14,19 16.5,18" stroke="#000" fill="none" stroke-width="1"/><text x="16.5" y="21" font-family="Liberation Sans,sans-serif" font-size="5" font-weight="bold" fill="#000">α</text></svg></div><div class="a" style="left:62px;top:797px;width:28px;height:31px;background:#5cbca4;padding:0"><div class="a" style="left:2px;top:2px;width:24px;height:27px;background:#fcfcd0;border:2px solid;border-color:#ffffec #b8b488 #b8b488 #ffffec"></div><svg class="a" style="left:0;top:0" width="28" height="31" viewBox="0 0 28 31"><rect x="7" y="8" width="15" height="15" stroke="#000" fill="none" stroke-width="1.3"/><path d="M9.5,20.5V13.5L13.5,10.5H19.5V20.5ZM14.5,10.5V20.5M9.5,15.5H19.5" stroke="#000" fill="none" stroke-width="1.1"/></svg></div>
<div class="a" style="left:91px;top:796px;width:48px;height:33px;background:#fffcd4"></div>
<div class="a mono m12" id="t_xy" style="left:94px;top:807px;line-height:13px">X Y :</div>
<div class="a" style="left:139px;top:796px;width:174px;height:33px;background:#fffcd4"></div>
<div class="a" style="left:141px;top:798px;width:170px;height:29px;background:#fcfcd0;border:2px solid;border-color:#b4b088 #e8e8c0 #e8e8c0 #b4b088;box-shadow:0 0 0 1px #ffffe8"></div>
<svg class="a" style="left:145px;top:800px" width="8" height="18" viewBox="0 0 8 18"><path d="M4,2V15" stroke="#000" stroke-width="1" stroke-dasharray="1 1"/><path d="M2.5,1.5L4,3L5.5,1.5M2.5,15.5L4,14L5.5,15.5" stroke="#000" fill="none" stroke-width="0.9"/></svg>
<div class="a" style="left:314px;top:797px;width:29px;height:31px;background:#5cbca4;padding:0"><div class="a" style="left:2px;top:2px;width:25px;height:27px;background:#fcfcd0;border:2px solid;border-color:#ffffec #b8b488 #b8b488 #ffffec"></div><svg class="a" style="left:0;top:0" width="29" height="31" viewBox="0 0 29 31"><rect x="7" y="7" width="15" height="17" stroke="#000" fill="none" stroke-width="1.3"/><text x="14.5" y="21" text-anchor="middle" font-family="Liberation Sans,sans-serif" font-size="14" font-weight="bold" fill="#000">!</text></svg></div>
<div class="a" style="left:345px;top:796px;width:1011px;height:33px;background:#fffcd4;border-left:1px solid #000"></div>
<div class="a mono m12" id="t_m1" style="left:347px;top:800px;line-height:13px">&lt;M1&gt; - Select feature to highlight ; &lt;M1&gt;&lt;M1&gt; - Highlight identical</div>
<div class="a mono m12" id="t_m2" style="left:347px;top:813px;line-height:13px">&lt;Shift+M1&gt; - Add to highlight ; &lt;M2&gt; - Cancel highlight</div>
<div class="a" style="left:1356px;top:795px;width:80px;height:35px;background:#54c8ac;border:1px solid #000;border-left:2px solid #000"></div>
<div class="a mono m15" id="t_inch" style="left:1363px;top:799px;width:69px;height:27px;background:#54c8ac;border:2px solid;border-color:#b8f4e4 #2c7c68 #2c7c68 #b8f4e4;padding:5px 0 0 5px">Inch</div>
<div class="a" style="left:1413px;top:809px;width:12px;height:7px;background:#54c8ac;border:1px solid;border-color:#c8fcec #2c7c68 #2c7c68 #c8fcec;box-shadow:inset 0 0 0 1px #8cd8c4"></div>
<div class="a" style="left:0;top:832px;width:1436px;height:1px;background:#000"></div>
<div class="a" style="left:0;top:833px;width:1434px;height:25px;background:#b4fcfc;border-left:2px solid #e8ffff;border-top:3px solid #ccfefe;border-right:3px solid #4c9c9c"><div class="a" style="left:0;top:18px;width:1429px;height:2px;background:#4c9c9c"></div></div>
<div class="a" style="left:0;top:858px;width:1436px;height:1px;background:#000"></div>
<div class="a" style="left:0;top:859px;width:1436px;height:1px;background:#000"></div>
<div class="a" style="left:0;top:859px;width:1440px;height:5px;background:linear-gradient(180deg,#fff 0,#fff 3px,#d4d0c8 3px)"></div>
<div class="a" style="left:0;top:864px;width:1440px;height:1px;background:#808080"></div>
<div class="a" style="left:1436px;top:19px;width:4px;height:845px;background:linear-gradient(90deg,#d4d0c8 0,#d4d0c8 2px,#808080 2px,#808080 3px,#404040 3px)"></div>
<div class="a" style="left:17px;top:865px;width:1001px;height:5px;background:#fff;border-bottom:2px solid #484848;border-right:1px solid #404040"></div>
<div class="a" style="left:1018px;top:865px;width:422px;height:2px;background:#e8e8e4"></div>
<div class="a sans" style="left:10px;top:863px;font-size:6px;line-height:7px;color:#000;font-weight:bold">办</div>
<div class="a" style="left:0;top:872px;width:1440px;height:28px;background:#d4d0c8;border-top:1px solid #fff"></div>
<div class="tk" style="left:2px;width:50px"><svg viewBox="0 0 16 16" style="left:2px;top:0px;width:20px;height:19px"><path d="M4,3Q7,1.5 8.5,3V8Q7,6.5 4,8Z" fill="#e03020"/><path d="M9,3.2Q11,5 13.5,3.5V8.5Q11,10 9,8.2Z" fill="#20a030"/><path d="M4,8.6Q7,7.1 8.5,8.6V13.6Q7,12 4,13.6Z" fill="#2040d0"/><path d="M9,8.8Q11,10.6 13.5,9.1V14Q11,15.5 9,13.8Z" fill="#e8c020"/><path d="M0,4h3M0,6.5h3M0,9h3M0,11.5h3" stroke="#000" stroke-width="1" stroke-dasharray="1 1"/><path d="M3.5,2.5V14" stroke="#000" stroke-width="0.8"/></svg><span class="sans" style="left:21px;font-size:12px;font-weight:500;letter-spacing:0">开始</span></div>
<div class="a" style="left:57px;top:877px;width:3px;height:19px;border:1px solid;border-color:#fff #808080 #808080 #fff"></div><div class="a" style="left:142px;top:877px;width:3px;height:19px;border:1px solid;border-color:#fff #808080 #808080 #fff"></div>
<svg class="a" style="left:68px;top:877px" width="66" height="20" viewBox="0 0 66 20"><rect x="0.5" y="1.5" width="17" height="17" fill="#f0d8d8" stroke="#e05050"/><circle cx="9" cy="10" r="6.5" fill="#1038a8"/><path d="M6,6Q9,5 10,8Q8,10 9,13Q6,12 5,9Z" fill="#30a040"/><rect x="24" y="5" width="13" height="12" fill="#fff" stroke="#2060c0" stroke-width="1.5"/><path d="M29,12L38,2L40,4L31,14Z" fill="#e8b020" stroke="#604000" stroke-width="0.6"/><rect x="47.5" y="1.5" width="16" height="17" fill="#fce8c0" stroke="#e8a020" stroke-width="1.4"/><circle cx="55.5" cy="10" r="4.5" fill="#fff" stroke="#e8a020" stroke-width="1.3"/><path d="M55.5,7V10H58" stroke="#c07000" fill="none"/></svg>
<div class="tk" style="left:150px;"><svg viewBox="0 0 16 16"><path d="M8,0.5L10.2,5.5L15.5,6L11.5,9.8L12.8,15.2L8,12.3L3.2,15.2L4.5,9.8L0.5,6L5.8,5.5Z" fill="#f89020" stroke="#d06000" stroke-width="0.6"/><circle cx="8" cy="8.5" r="2.4" fill="#fcd890"/></svg><span class="sans" id="tk0">订...</span></div>
<div class="tk" style="left:205px;"><svg viewBox="0 0 16 16"><circle cx="8.5" cy="9" r="6" fill="#20a0c8" stroke="#1060a0"/><ellipse cx="8.5" cy="9" rx="3" ry="2.2" fill="#40c040"/><path d="M2,5Q4,0 9,2" stroke="#1080c0" fill="none" stroke-width="1.6"/><path d="M3,12Q8,16 14,11" stroke="#e8c020" fill="none" stroke-width="1.3"/></svg><span class="sans" id="tk1">Ge...</span></div>
<div class="tk" style="left:260px;"><svg viewBox="0 0 16 16"><rect x="0.5" y="1.5" width="15" height="13" fill="#fff" stroke="#404040"/><rect x="1" y="2" width="14" height="3" fill="#0a246a"/><path d="M4,7L12,13M12,7L4,13" stroke="#b4b400" stroke-width="2.2"/></svg><span class="sans" id="tk2">En...</span></div>
<div class="tk" style="left:315px;"><svg viewBox="0 0 16 16"><rect x="0.5" y="1.5" width="15" height="13" fill="#fff" stroke="#404040"/><rect x="1" y="2" width="14" height="3" fill="#0a246a"/><path d="M4,7L12,13M12,7L4,13" stroke="#b4b400" stroke-width="2.2"/></svg><span class="sans" id="tk3">Pro...</span></div>
<div class="tk" style="left:370px;"><svg viewBox="0 0 16 16"><rect x="1" y="1.5" width="14" height="14" fill="#1830c0" stroke="#001060"/><rect x="4" y="1.5" width="8" height="5" fill="#fff"/><rect x="1.5" y="8" width="13" height="2.2" fill="#e02020"/><rect x="1.5" y="10.2" width="13" height="2" fill="#fff"/><rect x="1.5" y="12.2" width="13" height="2.5" fill="#e02020"/></svg><span class="sans" id="tk4">Tot...</span></div>
<div class="tk" style="left:425px;"><svg viewBox="0 0 16 16"><rect x="0.5" y="0.5" width="15" height="15" fill="#fce8c0" stroke="#e8a020" stroke-width="1.3"/><circle cx="8" cy="8" r="4.6" fill="#fff" stroke="#e8a020" stroke-width="1.3"/><path d="M8,5V8H10.5" stroke="#c07000" fill="none"/></svg><span class="sans" id="tk5">收...</span></div>
<div class="tk" style="left:480px;"><svg viewBox="0 0 16 16"><rect x="0.5" y="0.5" width="15" height="15" fill="#f0d0d0" stroke="#e05050"/><circle cx="8" cy="8" r="6.3" fill="#1038a8"/><path d="M5,4Q8,3 9,6Q7,8 8,11.5Q5,10 4,7Z" fill="#30a040"/></svg><span class="sans" id="tk6">pc...</span></div>
<div class="tk" style="left:535px;"><svg viewBox="0 0 16 16"><path d="M6,1H13L15.5,3.5V15H6Z" fill="#d8e4f8" stroke="#7090c0" stroke-width="0.8"/><rect x="0.5" y="2.5" width="10" height="9" fill="#2850b0" stroke="#102870"/><path d="M2.5,4.5L4,9.5L5.5,5.5L7,9.5L8.5,4.5" stroke="#fff" stroke-width="1.1" fill="none"/></svg><span class="sans" id="tk7">部...</span></div>
<div class="tk" style="left:590px;"><svg viewBox="0 0 16 16"><path d="M6,1H13L15.5,3.5V15H6Z" fill="#d8e4f8" stroke="#7090c0" stroke-width="0.8"/><rect x="0.5" y="2.5" width="10" height="9" fill="#208030" stroke="#104818"/><path d="M3,4.5L8,9.5M8,4.5L3,9.5" stroke="#fff" stroke-width="1.4"/></svg><span class="sans" id="tk8">CA...</span></div>
<div class="tk" style="left:645px;"><svg viewBox="0 0 16 16"><path d="M6,1H13L15.5,3.5V15H6Z" fill="#d8e4f8" stroke="#7090c0" stroke-width="0.8"/><rect x="0.5" y="2.5" width="10" height="9" fill="#208030" stroke="#104818"/><path d="M3,4.5L8,9.5M8,4.5L3,9.5" stroke="#fff" stroke-width="1.4"/></svg><span class="sans" id="tk9">4V...</span></div>
<div class="tk" style="left:700px;"><svg viewBox="0 0 16 16"><rect x="2.5" y="2.5" width="11" height="12.5" fill="#fff" stroke="#202020"/><path d="M3,2.5h10" stroke="#202020" stroke-width="2" stroke-dasharray="1 1"/><path d="M4.5,6h7M4.5,8h7M4.5,10h7M4.5,12h7" stroke="#202020" stroke-width="0.9"/></svg><span class="sans" id="tk10">4v...</span></div>
<div class="tk" style="left:755px;"><svg viewBox="0 0 16 16"><rect x="0.5" y="1.5" width="15" height="13" fill="#fff" stroke="#404040"/><rect x="1" y="2" width="14" height="3" fill="#0a246a"/><path d="M4,7L12,13M12,7L4,13" stroke="#b4b400" stroke-width="2.2"/></svg><span class="sans" id="tk11">4v...</span></div>
<div class="tk" style="left:810px;"><svg viewBox="0 0 16 16"><path d="M6,1H13L15.5,3.5V15H6Z" fill="#d8e4f8" stroke="#7090c0" stroke-width="0.8"/><rect x="0.5" y="2.5" width="10" height="9" fill="#208030" stroke="#104818"/><path d="M3,4.5L8,9.5M8,4.5L3,9.5" stroke="#fff" stroke-width="1.4"/></svg><span class="sans" id="tk12">4V...</span></div>
<div class="tk" style="left:865px;"><svg viewBox="0 0 16 16"><rect x="0.5" y="1.5" width="15" height="13" fill="#fff" stroke="#404040"/><rect x="1" y="2" width="14" height="3" fill="#0a246a"/><path d="M4,7L12,13M12,7L4,13" stroke="#b4b400" stroke-width="2.2"/></svg><span class="sans" id="tk13">4v...</span></div>
<div class="tk" style="left:920px;border-color:#404040 #fff #fff #404040;box-shadow:inset 1px 1px 0 #808080;background:#ecebe6;"><svg viewBox="0 0 16 16"><rect x="0.5" y="1.5" width="15" height="13" fill="#fff" stroke="#404040"/><rect x="1" y="2" width="14" height="3" fill="#0a246a"/><path d="M4,7L12,13M12,7L4,13" stroke="#b4b400" stroke-width="2.2"/></svg><span class="sans" id="tk14">Gr...</span></div>
<div class="tk" style="left:975px;"><svg viewBox="0 0 16 16"><path d="M1,4Q1,2 3,2H6L8,4H13Q14,4 14,5V6H1Z" fill="#f8e080" stroke="#806000" stroke-width="0.8"/><path d="M1,6H14L15.5,14H2.5Z" fill="#fce878" stroke="#806000" stroke-width="0.8"/></svg><span class="sans" id="tk15">4V...</span></div>
<div class="a" style="left:1272px;top:876px;width:166px;height:22px;border:1px solid;border-color:#808080 #fff #fff #808080"></div>
<svg class="a" style="left:1276px;top:878px" width="110" height="18" viewBox="0 0 110 18">
<path d="M1,9L9,2L15,7L7,15Z" fill="#e8e040" stroke="#504800" stroke-width="0.9"/><path d="M4,9L10,4M6,11L12,6" stroke="#504800" stroke-width="0.7"/>
<path d="M18,15L29,3L31,15Z" fill="#e82020"/><path d="M28,9L33,15H27Z" fill="#30c040"/>
<path d="M37,3L52,15M52,3L37,15" stroke="#8020a0" stroke-width="2.6"/>
<circle cx="62" cy="10" r="5.5" fill="none" stroke="#2080c0" stroke-width="1.8"/><rect x="60" y="4" width="4" height="9" fill="#f0c020"/><circle cx="62" cy="3" r="2" fill="#e85020"/>
<rect x="72" y="1" width="16" height="16" fill="#909050"/><circle cx="80" cy="9" r="5" fill="#e8e8d8" stroke="#fff"/><path d="M80,6V9H82.5" stroke="#606030" fill="none"/>
<rect x="91" y="3" width="11" height="11" fill="#787040" stroke="#403800"/><rect x="94" y="1" width="5" height="3" fill="#a09860" stroke="#403800" stroke-width="0.6"/><rect x="97" y="8" width="4" height="4" fill="#e04040"/><rect x="101" y="10" width="4" height="4" fill="#4060e0"/><rect x="97" y="13" width="4" height="4" fill="#40a040"/>
</svg>
<div class="a sans" id="t_clock" style="left:1399px;top:880px;font-size:11px;line-height:13px">3:11</div>
<div class="a" style="left:1252px;top:848px;width:78px;height:24px;background:#d4d0c8;border:1px solid;border-color:#fff #808080 #808080 #fff"></div>
<svg class="a" style="left:1252px;top:848px" width="78" height="24" viewBox="0 0 78 24">
<path d="M3.5,3V21M5.5,3V21" stroke="#a0a0a0" stroke-width="1" stroke-dasharray="1 1"/>
<rect x="10.5" y="4.5" width="13" height="14" fill="#28b040" stroke="#28b040"/><path d="M9,3v3M9,3h3M25,3v3M25,3h-3M9,20v-3M9,20h3M25,20v-3M25,20h-3" stroke="#107020" stroke-width="0.8" fill="none"/>
<path d="M29.5,3V21M57.500,3V21" stroke="#808080"/><path d="M30.5,3V21M58.5,3V21" stroke="#fff"/>
<path d="M39.500,5.500H49.500V16.500H46.500L47.500,19.500L43.500,16.500H39.500Z" fill="#fff" stroke="#000"/>
<rect x="63" y="7" width="5" height="2" fill="#000"/><path d="M62.500,14H68.500L65.500,17Z" fill="#000"/>
</svg>
<div class="a sans" style="left:1263px;top:851px;width:12px;font-size:14px;line-height:15px;font-weight:bold;color:#fff;text-align:center">S</div>
<div class="a sans" style="left:1293px;top:853px;width:8px;font-size:11px;line-height:12px;font-weight:bold;color:#0a246a;text-align:center">?</div><div class="a" id="popup" style="left:661px;top:72px;width:639px;height:704px;background:#d4d0c8;border:1px solid;border-color:#d4d0c8 #404040 #404040 #d4d0c8;box-shadow:inset 1px 1px 0 #fff,inset -1px -1px 0 #808080">
<div class="a" style="left:3px;top:2px;width:631px;height:18px;background:linear-gradient(90deg,#0a246a 0%,#a6caf0 100%)"></div>
<svg class="a" style="left:5px;top:3px" width="16" height="16" viewBox="0 0 16 16"><rect x="0.5" y="0.5" width="15" height="14" fill="#fff" stroke="#808080"/><rect x="1" y="1" width="11" height="2" fill="#0a246a"/><path d="M4,6L12,12.500M12,6L4,12.500" stroke="#c8c820" stroke-width="2.4"/></svg>
<div class="a sans" id="t_pop" style="left:23px;top:5px;font-size:11px;line-height:13px;font-weight:bold;color:#fff;letter-spacing:0.25px">Popview - 1</div>
<div class="a" style="left:616px;top:4px;width:16px;height:14px;background:#d4d0c8;border:1px solid;border-color:#fff #404040 #404040 #fff;box-shadow:inset -1px -1px 0 #808080"><svg class="a" style="left:-1px;top:-1px" width="16" height="14" viewBox="0 0 16 14"><path d="M4,3.500L11,10M11,3.500L4,10" stroke="#000" stroke-width="1.7"/></svg></div>
<div class="a" style="left:3px;top:21px;width:631px;height:678px;background:#54c8ac"></div>
<div class="a" style="left:3px;top:21px;width:594px;height:649px;background:#000;border-style:solid;border-width:3px 3px 3px 3px;border-color:#2c7060 #c8f8ec #c8f8ec #2c7060"></div>
<div class="a" style="left:3px;top:670px;width:631px;height:1px;background:#000"></div>
<div class="a" style="left:597px;top:21px;width:2px;height:650px;background:#000"></div>
<div class="a" style="left:597px;top:21px;width:37px;height:2px;background:#000"></div>
<div class="a" style="left:632px;top:21px;width:2px;height:650px;background:#000"></div>
<div class="a" style="left:633px;top:671px;width:1px;height:28px;background:#000"></div>
<div class="a" style="left:3px;top:698px;width:631px;height:1px;background:#000"></div>
<div class="a" style="left:3px;top:671px;width:1px;height:28px;background:#000"></div>
<svg class="a" style="left:6px;top:24px" width="588" height="643" viewBox="668 97 588 643">
<defs><mask id="gm" maskUnits="userSpaceOnUse" x="668" y="97" width="588" height="643"><path d="M1193.6,380.0 C1193.6,386.7 1193.7,409.9 1193.6,420.0 C1193.5,430.1 1193.6,434.4 1193.1,440.5 C1192.6,446.6 1192.2,451.5 1190.7,456.4 C1189.2,461.3 1187.2,465.4 1183.9,470.0 C1180.6,474.6 1176.1,480.2 1171.1,484.1 C1166.1,488.0 1159.4,491.4 1153.9,493.6 C1148.5,495.9 1142.9,496.7 1138.4,497.6 C1133.9,498.5 1129.0,498.9 1127.1,499.1 L1127.1,499.1 C1126.9,499.9 1126.8,500.3 1126.0,503.9 C1125.2,507.4 1124.0,515.6 1122.1,520.4 C1120.2,525.2 1117.5,528.5 1114.4,532.8 C1111.3,537.1 1106.9,542.7 1103.7,546.1 C1100.5,549.5 1100.0,550.7 1095.3,553.0 C1090.5,555.3 1081.1,558.8 1075.2,560.0 C1069.3,561.2 1062.3,560.3 1059.7,560.4" fill="none" stroke="#fff" stroke-width="21" stroke-linejoin="round" stroke-linecap="round"/></mask></defs>
<g fill="none" stroke-width="21" stroke-linejoin="round" stroke-linecap="butt">
<path d="M1059.7,420 V560.4 H920" stroke="#ff0000"/>
<path d="M1194,390 V426.600 A134.300,133.800 0 0 1 1059.700,560.400" stroke="#ff0000"/>
<path d="M1049,97V430" stroke="#ff0000" stroke-width="2"/>
<path d="M1193.6,380.0 C1193.6,386.7 1193.7,409.9 1193.6,420.0 C1193.5,430.1 1193.6,434.4 1193.1,440.5 C1192.6,446.6 1192.2,451.5 1190.7,456.4 C1189.2,461.3 1187.2,465.4 1183.9,470.0 C1180.6,474.6 1176.1,480.2 1171.1,484.1 C1166.1,488.0 1159.4,491.4 1153.9,493.6 C1148.5,495.9 1142.9,496.7 1138.4,497.6 C1133.9,498.5 1129.0,498.9 1127.1,499.1 L1127.1,499.1 C1126.9,499.9 1126.8,500.3 1126.0,503.9 C1125.2,507.4 1124.0,515.6 1122.1,520.4 C1120.2,525.2 1117.5,528.5 1114.4,532.8 C1111.3,537.1 1106.9,542.7 1103.7,546.1 C1100.5,549.5 1100.0,550.7 1095.3,553.0 C1090.5,555.3 1081.1,558.8 1075.2,560.0 C1069.3,561.2 1062.3,560.3 1059.7,560.4" stroke="#3c9b00" stroke-linecap="round"/>
<path d="M1194,390 V426.600 A134.300,133.800 0 0 1 1059.700,560.400" stroke="#bc9a0a" mask="url(#gm)"/>
<path d="M660,426.600 H1059.700 V90" stroke="#bc9a0a"/>
<path d="M660,560.400 H926.800 V750" stroke="#bc9a0a"/>
<path d="M1059.700,560.400 V750" stroke="#bc9a0a" stroke-linecap="round"/>
<path d="M1194,90 V412" stroke="#bc9a0a"/>
</g></svg>
<div class="pb" style="left:599px;top:23px"><b><i></i></b><svg viewBox="0 0.5 33 34"><rect x="9.5" y="13" width="10.5" height="10.5" stroke="#000" fill="none" stroke-width="2"/><rect x="19.5" y="9.5" width="5.5" height="6" stroke="#000" fill="none" stroke-width="1.2"/><path d="M12.5,18.2H17.500M12.5,18.2l2.5,-2.5M12.5,18.2l2.5,2.5" stroke="#000" fill="none" stroke-width="1.2"/></svg></div>
<div class="a" style="left:598px;top:56px;width:36px;height:2px;background:#000"></div>
<div class="pb" style="left:599px;top:58px"><b><i></i></b><svg viewBox="0 0.5 33 34"><path d="M13,15.5H10V24.5H23V15.500H20" stroke="#000" fill="none" stroke-width="2"/><path d="M16.500,8.500L22,14H19V20.500H14V14H11Z" fill="#000"/></svg></div>
<div class="a" style="left:598px;top:91px;width:36px;height:2px;background:#000"></div>
<div class="pb" style="left:599px;top:93px"><b><i></i></b><svg viewBox="0 0.5 33 34"><path d="M13,19.500H10V10.500H23V19.500H20" stroke="#000" fill="none" stroke-width="2"/><path d="M16.500,26.500L22,21H19V14.500H14V21H11Z" fill="#000"/></svg></div>
<div class="a" style="left:598px;top:126px;width:36px;height:2px;background:#000"></div>
<div class="pb" style="left:599px;top:128px"><b><i></i></b><svg viewBox="0 0.5 33 34"><path d="M15.500,13V10.500H24V24H15.500V21.500" stroke="#000" fill="none" stroke-width="2"/><path d="M8,17.200L13.500,11.700V14.700H20V19.700H13.500V22.700Z" fill="#000"/></svg></div>
<div class="a" style="left:598px;top:161px;width:36px;height:2px;background:#000"></div>
<div class="pb" style="left:599px;top:163px"><b><i></i></b><svg viewBox="0 0.5 33 34"><path d="M17.500,13V10.500H9.500V24H17.500V21.500" stroke="#000" fill="none" stroke-width="2"/><path d="M25.500,17.200L20,11.700V14.700H13.500V19.700H20V22.700Z" fill="#000"/></svg></div>
<div class="a" style="left:598px;top:196px;width:36px;height:2px;background:#000"></div>
<div class="pb" style="left:599px;top:198px"><b><i></i></b><svg viewBox="0 0.5 33 34"><rect x="14.500" y="15.200" width="4.500" height="4.500" stroke="#000" fill="none" stroke-width="1.300"/><path d="M16.700,14L13,9.500H20.500ZM16.700,21L13,25.500H20.500ZM13.500,17.500L8.500,14V21ZM20,17.500L25,14V21Z" fill="#000"/><path d="M8.500,9.500L12.500,13.500M25,9.500L21,13.500M8.500,25.500L12.500,21.500M25,25.500L21,21.500" stroke="#000" fill="none" stroke-width="1.600"/></svg></div>
<div class="a" style="left:598px;top:231px;width:36px;height:2px;background:#000"></div>
<div class="pb" style="left:599px;top:233px"><b><i></i></b><svg viewBox="0 0.5 33 34"><rect x="14.500" y="15.200" width="4.500" height="4.500" stroke="#000" fill="none" stroke-width="1.300"/><path d="M16.700,9L12.700,13.500H20.700ZM16.700,26L12.700,21.500H20.700ZM8.300,17.500L12.800,13.700V21.300ZM25.200,17.500L20.700,13.700V21.300Z" fill="#000"/></svg></div>
<div class="a" style="left:598px;top:266px;width:36px;height:2px;background:#000"></div>
<div class="a mono" id="t_close" style="left:6px;top:673px;width:626px;height:24px;background:#9cdcdc;border:2px solid;border-color:#d8fcfc #4c9c8c #4c9c8c #d8fcfc;font-size:15px;line-height:15px;text-align:center;padding-top:3px">Close</div>
</div></body></html>
